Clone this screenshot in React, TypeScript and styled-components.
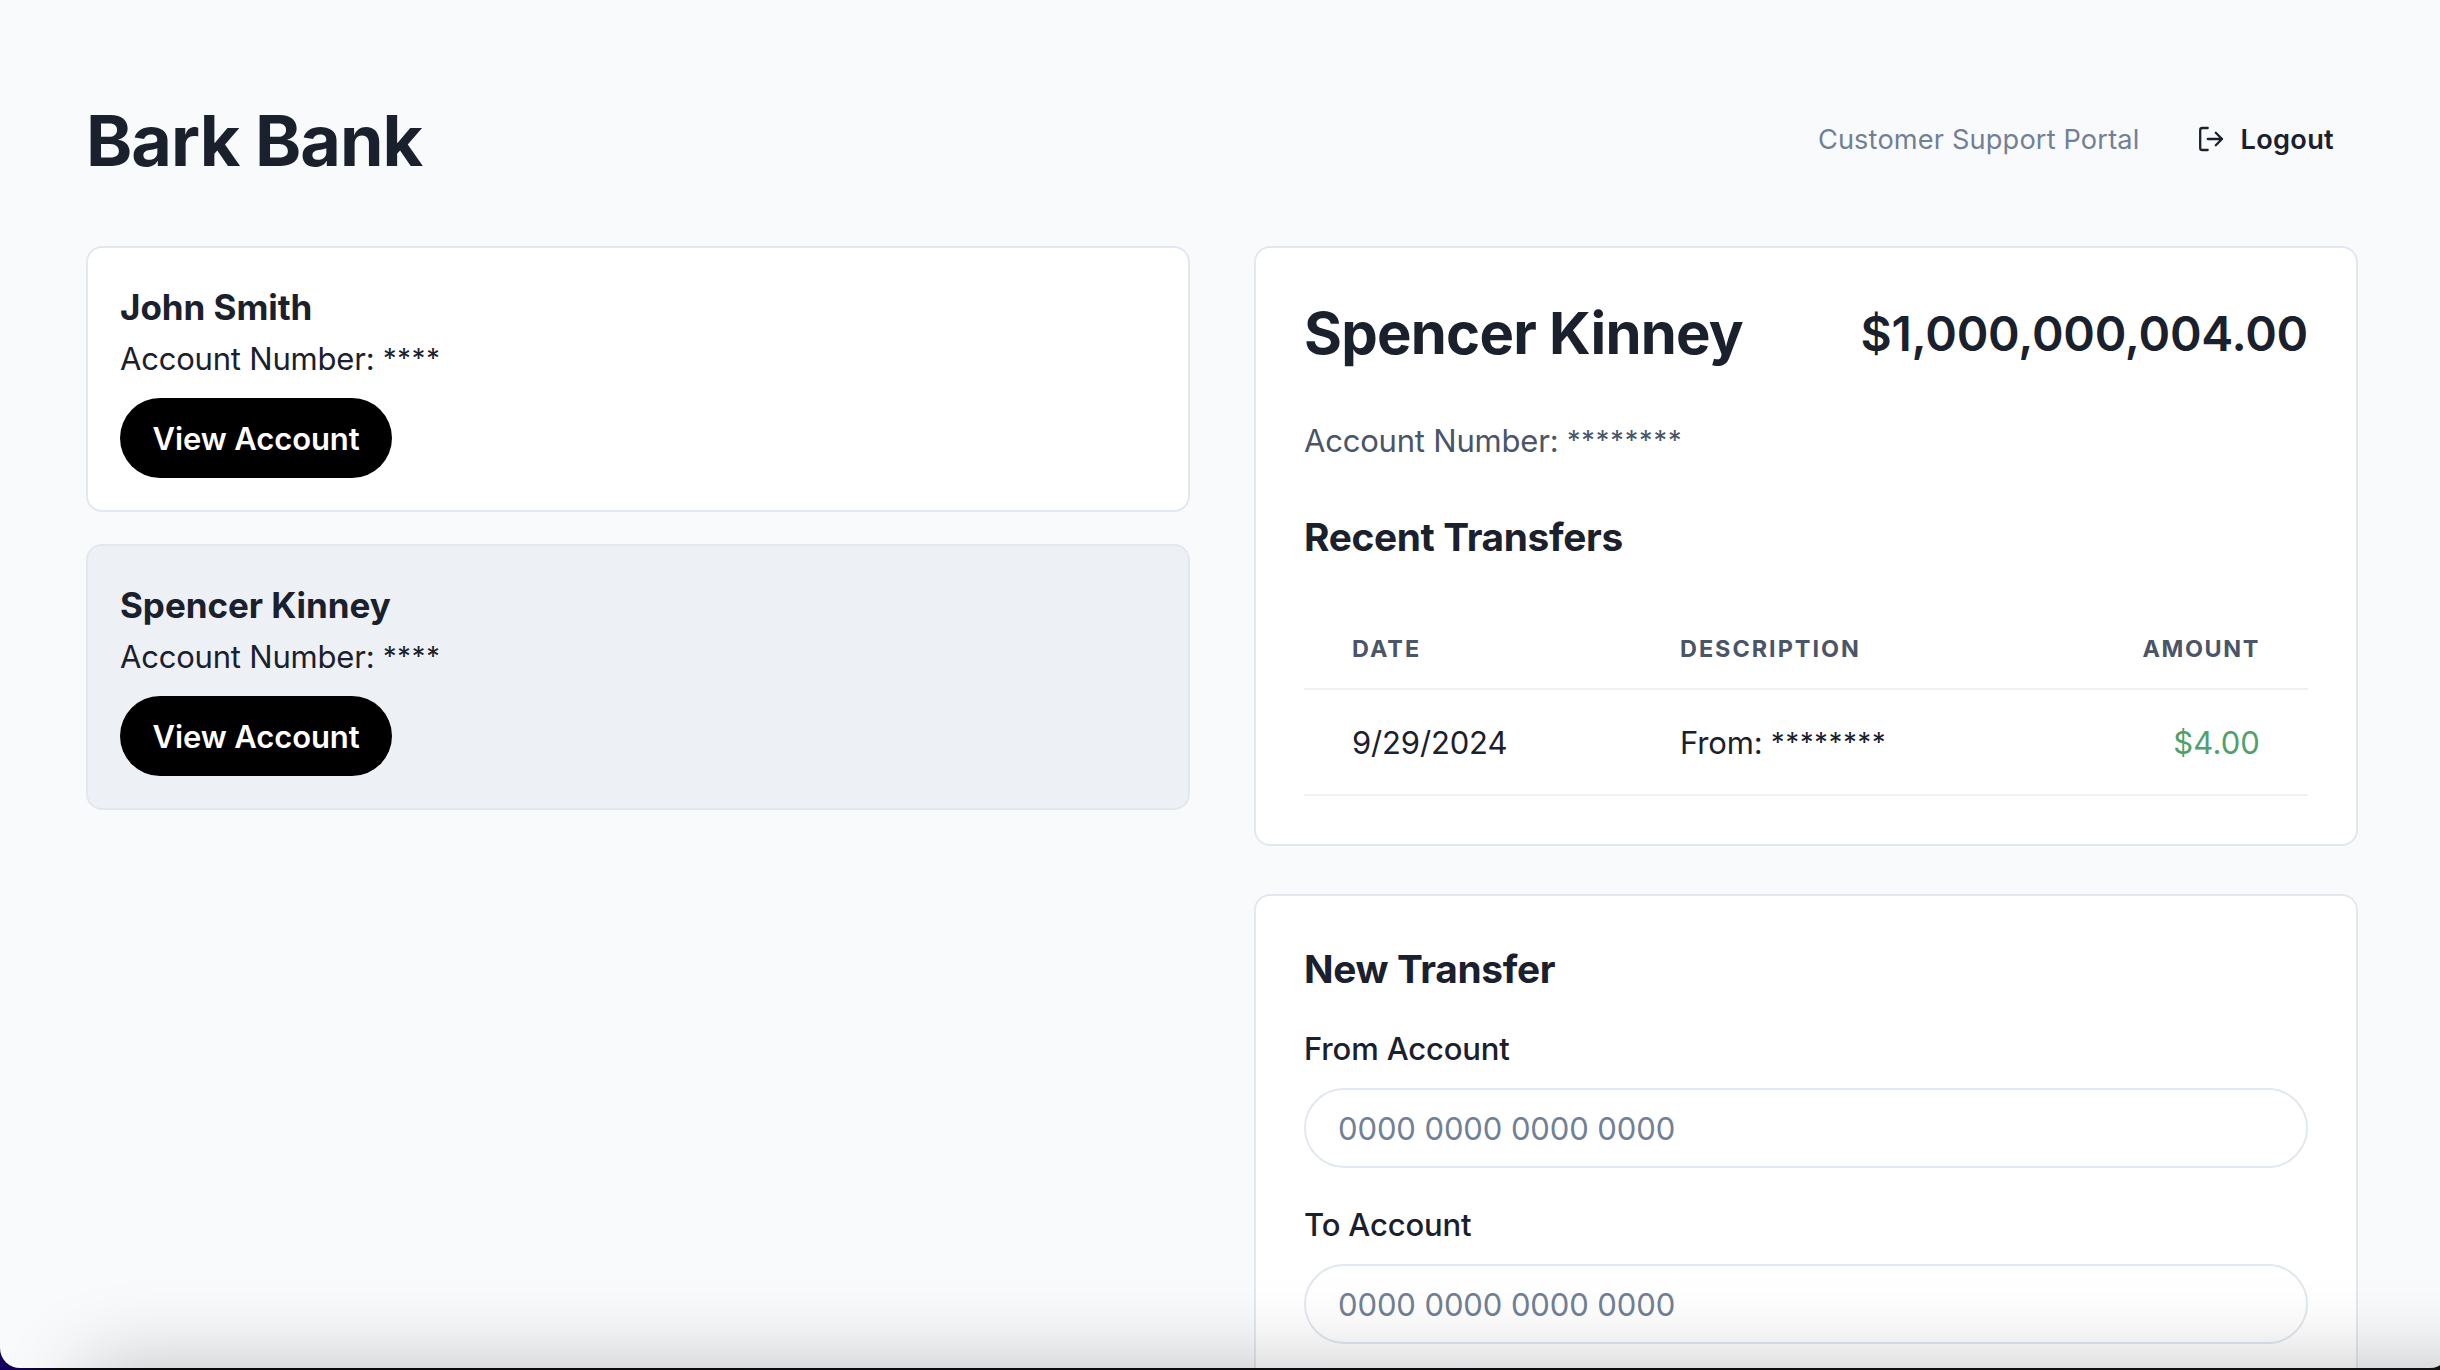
import React from "react";
import styled, { createGlobalStyle } from "styled-components";

const Global = createGlobalStyle`
  *{box-sizing:border-box}
  html,body{margin:0;height:100%;overflow:hidden}
  body{background:#0b0b0d;color:#1a202c;font-family:Inter,"Liberation Sans",sans-serif;font-size:31px;line-height:48px;letter-spacing:-.2px}
  h1,h2,h3,p{margin:0}
`;

const Desktop = styled.div`
  height: 1370px;
  position: relative;
  overflow: hidden;
  background: linear-gradient(90deg, #14005a 0, #14005a 14px, #08080c 60px, #111 100%);
`;
const Window = styled.div`
  height: 1368px;
  margin-right: -10px;
  overflow: hidden;
  position: relative;
  padding: 86px 92px 0 86px;
  background: #f9fafc;
  border-radius: 0 0 20px 20px;
`;
const DockShadow = styled.div`
  position: absolute;
  left: 84px;
  right: -200px;
  top: 1369px;
  height: 400px;
  box-shadow: 0 0 80px rgba(0, 0, 0, 0.24);
`;

const Header = styled.header`
  display: flex;
  align-items: center;
  justify-content: space-between;
  height: 108px;
  margin-bottom: 52px;
  padding-right: 24px;
`;
const Title = styled.h1`
  padding-top: 2px;
  font-size: 70px;
  line-height: 86px;
  font-weight: 700;
  letter-spacing: -0.97px;
`;
const Nav = styled.nav`
  display: flex;
  align-items: center;
  gap: 58px;
  font-size: 27.2px;
`;
const Muted = styled.span`
  color: #718096;
  letter-spacing: 0.15px;
`;
const Logout = styled.a`
  display: flex;
  align-items: center;
  gap: 15px;
  font-weight: 600;
  letter-spacing: 0.3px;
`;

const Columns = styled.main`
  display: grid;
  grid-template-columns: 1104px 1104px;
  gap: 64px;
  align-items: start;
`;
const Stack = styled.section<{ $gap: number }>`
  display: flex;
  flex-direction: column;
  gap: ${(p) => p.$gap}px;
`;

const Account = styled.article<{ $active?: boolean }>`
  height: 266px;
  border: 2px solid #e2e8f0;
  border-radius: 16px;
  padding: 32px;
  background: ${(p) => (p.$active ? "#edf1f6" : "#fff")};
`;
const Name = styled.h3`
  font-size: 35px;
  line-height: 54px;
  font-weight: 700;
  letter-spacing: -0.05px;
`;
const AccountNumber = styled.p<{ $muted?: boolean }>`
  padding-top: 1px;
  height: 48px;
  color: ${(p) => (p.$muted ? "#4a5568" : "inherit")};
`;
const Mask = styled.span`
  font-size: 27px;
  line-height: 0;
  vertical-align: 2px;
  letter-spacing: 0.9px;
`;
const Button = styled.button`
  display: block;
  margin-top: 16px;
  width: 272px;
  height: 80px;
  padding: 1px 0 0;
  border: 0;
  border-radius: 40px;
  background: #000;
  color: #fff;
  font: 600 31px/48px Inter, sans-serif;
  letter-spacing: -0.1px;
`;

const Card = styled.article`
  border: 2px solid #e2e8f0;
  border-radius: 16px;
  background: #fff;
  padding: 48px;
`;
const Summary = styled.div`
  display: flex;
  align-items: center;
  justify-content: space-between;
  height: 72px;
  margin-bottom: 48px;
`;
const Owner = styled.h2`
  padding-top: 2px;
  font-size: 58px;
  line-height: 74px;
  font-weight: 700;
  letter-spacing: -0.77px;
`;
const Balance = styled.div`
  padding-top: 3px;
  font-size: 48px;
  line-height: 74px;
  font-weight: 600;
  letter-spacing: -0.25px;
`;
const Heading = styled.h3`
  height: 48px;
  padding-top: 1px;
  font-size: 38.8px;
  line-height: 48px;
  font-weight: 700;
  letter-spacing: -0.33px;
`;
const Section = styled.section`
  margin-top: 48px;
`;

const Table = styled.table`
  width: 100%;
  margin-top: 48px;
  table-layout: fixed;
  border-collapse: separate;
  border-spacing: 0;
`;
const HeadCell = styled.th<{ $width?: number; $end?: boolean }>`
  width: ${(p) => (p.$width ? `${p.$width}px` : "auto")};
  height: 82px;
  padding: 1px 48px 0;
  border-bottom: 2px solid #edf2f7;
  color: #4a5568;
  font-size: 23.4px;
  line-height: 32px;
  font-weight: 700;
  letter-spacing: ${(p) => (p.$end ? 1.6 : 2)}px;
  text-transform: uppercase;
  text-align: ${(p) => (p.$end ? "right" : "left")};
`;
const Cell = styled.td<{ $end?: boolean }>`
  height: 106px;
  padding: 2px 48px 0;
  border-bottom: 2px solid #edf2f7;
  text-align: ${(p) => (p.$end ? "right" : "left")};
  color: ${(p) => (p.$end ? "#4fa06c" : "inherit")};
  letter-spacing: ${(p) => (p.$end ? 0.1 : -0.15)}px;
`;

const Form = styled.form`
  display: flex;
  flex-direction: column;
  gap: 32px;
`;
const Field = styled.label`
  display: flex;
  flex-direction: column;
  gap: 16px;
  font-weight: 500;
`;
const FieldName = styled.span`
  height: 48px;
  padding-top: 1px;
  letter-spacing: -0.15px;
`;
const Input = styled.input`
  width: 100%;
  height: 80px;
  padding: 1px 32px 0;
  border: 2px solid #e2e8f0;
  border-radius: 40px;
  background: #fff;
  color: #1a202c;
  font: 400 31px/48px Inter, sans-serif;
  letter-spacing: -0.1px;
  &::placeholder {
    color: #718096;
    opacity: 1;
  }
`;

const LogoutIcon = () => (
  <svg width="28" height="28" viewBox="0 0 28 28" fill="none" stroke="currentColor" strokeWidth="2.3" strokeLinecap="round" strokeLinejoin="round">
    <path d="M10.700 2H5.300Q3.200 2 3.200 4.100V21.900Q3.200 24 5.300 24H10.700" />
    <path d="M10.800 13H25M18.800 6.800L25 13L18.800 19.200" />
  </svg>
);

const accounts = [
  { name: "John Smith", active: false },
  { name: "Spencer Kinney", active: true },
];

export default function App() {
  return (
    <Desktop>
      <Global />
      <Window>
        <Header>
          <Title>Bark Bank</Title>
          <Nav>
            <Muted>Customer Support Portal</Muted>
            <Logout>
              <LogoutIcon />
              Logout
            </Logout>
          </Nav>
        </Header>
        <Columns>
          <Stack $gap={32}>
            {accounts.map((a) => (
              <Account key={a.name} $active={a.active}>
                <Name>{a.name}</Name>
                <AccountNumber>
                  Account Number: <Mask>****</Mask>
                </AccountNumber>
                <Button>View Account</Button>
              </Account>
            ))}
          </Stack>
          <Stack $gap={48}>
            <Card>
              <Summary>
                <Owner>Spencer Kinney</Owner>
                <Balance>$1,000,000,004.00</Balance>
              </Summary>
              <AccountNumber $muted>
                Account Number: <Mask>********</Mask>
              </AccountNumber>
              <Section>
                <Heading>Recent Transfers</Heading>
                <Table>
                  <thead>
                    <tr>
                      <HeadCell $width={328}>Date</HeadCell>
                      <HeadCell>Description</HeadCell>
                      <HeadCell $width={260} $end>Amount</HeadCell>
                    </tr>
                  </thead>
                  <tbody>
                    <tr>
                      <Cell>9/29/2024</Cell>
                      <Cell>
                        From: <Mask>********</Mask>
                      </Cell>
                      <Cell $end>$4.00</Cell>
                    </tr>
                  </tbody>
                </Table>
              </Section>
            </Card>
            <Card>
              <Form>
                <Heading>New Transfer</Heading>
                <Field>
                  <FieldName>From Account</FieldName>
                  <Input placeholder="0000 0000 0000 0000" />
                </Field>
                <Field>
                  <FieldName>To Account</FieldName>
                  <Input placeholder="0000 0000 0000 0000" />
                </Field>
              </Form>
            </Card>
          </Stack>
        </Columns>
        <DockShadow />
      </Window>
    </Desktop>
  );
}
